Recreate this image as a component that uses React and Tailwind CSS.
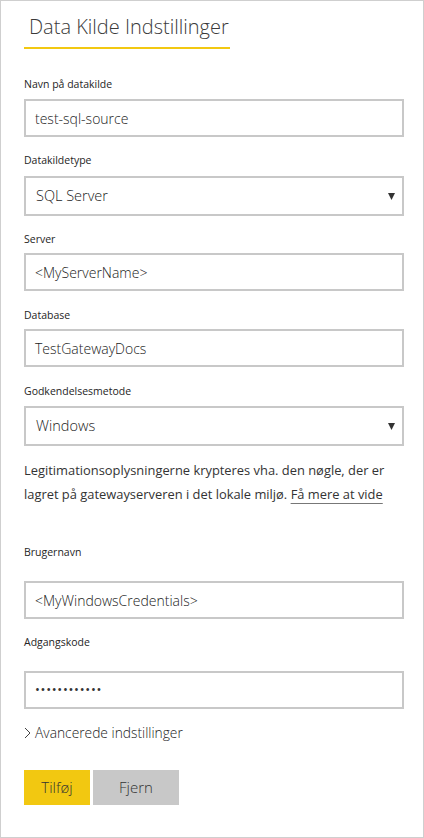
import React from 'react';

const font = { fontFamily: '"Open Sans", "Noto Sans", sans-serif' };

const Label = ({ children, className = '' }) => (
    <div className={`text-[10.5px] leading-4 text-[#252525] ${className}`}>{children}</div>
);

const TextBox = ({ value, className = '' }) => (
    <div className={`h-[38px] border-2 border-[#c8c8c8] bg-white flex items-center px-[9px] text-[14px] font-light text-[#222] ${className}`}>
        {value}
    </div>
);

const SelectBox = ({ value, className = '' }) => (
    <div className={`h-[40px] border-2 border-[#c8c8c8] bg-white flex items-center justify-between pl-[10px] pr-[7px] text-[14.5px] font-light text-[#222] ${className}`}>
        <span>{value}</span>
        <svg width="7" height="7" viewBox="0 0 7 7"><polygon points="0,0 7,0 3.5,7" fill="#333" /></svg>
    </div>
);

export default function App() {
    return (
        <div style={font} className="w-[424px] h-[838px] bg-white border border-[#cfcfcf] pl-[23px] pr-[19px] pt-[10px]">
            {/* header */}
            <div className="w-[206px] border-b-2 border-[#f2c811] pl-[5px] pb-[4px]">
                <h1 className="text-[20px] font-light leading-[32px] text-[#3a3a3a] whitespace-nowrap">Data Kilde Indstillinger</h1>
            </div>

            <Label className="mt-[27px]">Navn på datakilde</Label>
            <TextBox value="test-sql-source" className="mt-[7px]" />

            <Label className="mt-[15px]">Datakildetype</Label>
            <SelectBox value="SQL Server" className="mt-[8px]" />

            <Label className="mt-[15px]">Server</Label>
            <TextBox value="<MyServerName>" className="mt-[6px]" />

            <Label className="mt-[16px]">Database</Label>
            <TextBox value="TestGatewayDocs" className="mt-[6px]" />

            <Label className="mt-[16px]">Godkendelsesmetode</Label>
            <SelectBox value="Windows" className="mt-[7px]" />

            <p className="mt-[12px] text-[12.9px] leading-6 text-[#333] whitespace-nowrap">
                Legitimationsoplysningerne krypteres vha. den nøgle, der er<br />
                lagret på gatewayserveren i det lokale miljø.{' '}
                <a className="underline decoration-[#777] underline-offset-4">Få mere at vide</a>
            </p>

            <Label className="mt-[38px]">Brugernavn</Label>
            <TextBox value="<MyWindowsCredentials>" className="mt-[21px]" />

            <Label className="mt-[15px]">Adgangskode</Label>
            <div className="mt-[21px] h-[38px] border-2 border-[#c8c8c8] bg-white flex items-center px-[9px] text-[13px] tracking-[0.7px] text-[#333]">
                ••••••••••••
            </div>

            <div className="mt-[14px] flex items-center gap-[4px] text-[13.8px] font-light leading-5 text-[#222]">
                <svg width="7" height="12" viewBox="0 0 7 12"><polyline points="1,1 6,6 1,11" fill="none" stroke="#444" strokeWidth="1" /></svg>
                <span>Avancerede indstillinger</span>
            </div>

            <div className="mt-[27px] flex gap-[3px]">
                <button className="w-[66px] h-[35px] bg-[#f2c811] text-[15px] font-light text-[#333]">Tilføj</button>
                <button className="w-[86px] h-[35px] bg-[#c8c8c8] text-[15px] font-light text-[#333]">Fjern</button>
            </div>
        </div>
    );
}
